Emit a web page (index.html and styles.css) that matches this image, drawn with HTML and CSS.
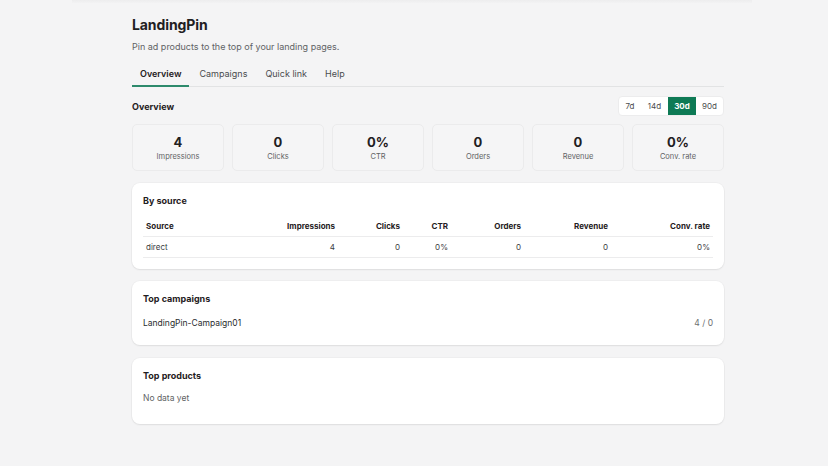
FILE: index.html
```html
<!DOCTYPE html>
<html>
<head>
<meta charset="utf-8">
<link rel="stylesheet" href="styles.css">
</head>
<body>
<div class="topband"></div>
<main class="page">
  <header class="head">
    <h1 class="title">LandingPin</h1>
    <p class="subtitle">Pin ad products to the top of your landing pages.</p>
  </header>
  <nav class="tabs">
    <span class="tab active">Overview</span>
    <span class="tab">Campaigns</span>
    <span class="tab">Quick link</span>
    <span class="tab">Help</span>
  </nav>
  <div class="section-head">
    <h2 class="section-title">Overview</h2>
    <div class="periods">
      <span class="period">7d</span>
      <span class="period">14d</span>
      <span class="period on">30d</span>
      <span class="period">90d</span>
    </div>
  </div>
  <div class="stats">
    <div class="stat"><div class="val">4</div><div class="lbl">Impressions</div></div>
    <div class="stat"><div class="val">0</div><div class="lbl">Clicks</div></div>
    <div class="stat"><div class="val">0%</div><div class="lbl">CTR</div></div>
    <div class="stat"><div class="val">0</div><div class="lbl">Orders</div></div>
    <div class="stat"><div class="val">0</div><div class="lbl">Revenue</div></div>
    <div class="stat"><div class="val">0%</div><div class="lbl">Conv. rate</div></div>
  </div>
  <section class="card">
    <h3 class="card-title">By source</h3>
    <table class="tbl">
      <colgroup>
        <col class="c-src"><col class="c-imp"><col class="c-clk"><col class="c-ctr"><col class="c-ord"><col class="c-rev"><col class="c-conv">
      </colgroup>
      <thead>
        <tr><th class="l">Source</th><th>Impressions</th><th>Clicks</th><th>CTR</th><th>Orders</th><th>Revenue</th><th>Conv. rate</th></tr>
      </thead>
      <tbody>
        <tr><td class="l">direct</td><td>4</td><td>0</td><td>0%</td><td>0</td><td>0</td><td>0%</td></tr>
      </tbody>
    </table>
  </section>
  <section class="card">
    <h3 class="card-title">Top campaigns</h3>
    <div class="row"><span>LandingPin-Campaign01</span><span class="muted">4 / 0</span></div>
  </section>
  <section class="card last">
    <h3 class="card-title">Top products</h3>
    <p class="empty">No data yet</p>
  </section>
</main>
</body>
</html>
```

FILE: styles.css
```css
* { box-sizing: border-box; }
html, body { margin: 0; padding: 0; }
body {
  background: #f4f4f5;
  font-family: Inter, "Liberation Sans", sans-serif;
  color: #202223;
  height: 466px;
  overflow: hidden;
}
.topband {
  margin: 0 76px 0 72px;
  height: 3px;
  background: linear-gradient(#ededee, #f2f2f3);
}
.page {
  width: 592px;
  margin-left: 132px;
  padding-top: 13px;
}
.title {
  margin: 0;
  font-size: 14px;
  font-weight: 700;
  line-height: 18px;
  color: #1f2022;
  letter-spacing: -0.1px;
}
.subtitle {
  margin: 7px 0 0;
  font-size: 9px;
  line-height: 12px;
  color: #616365;
}
.tabs {
  display: flex;
  margin-top: 12px;
  border-bottom: 1px solid #e2e3e4;
  height: 22px;
}
.tab {
  font-size: 9px;
  line-height: 13px;
  padding: 2px 8px 0;
  margin-right: 2px;
  color: #4a4c4e;
}
.tab.active {
  color: #1f2022;
  font-weight: 600;
  border-bottom: 2px solid #2d8a6c;
  margin-bottom: -1px;
}
.section-head {
  display: flex;
  align-items: center;
  justify-content: space-between;
  margin-top: 9px;
}
.section-title {
  margin: 0;
  font-size: 9px;
  font-weight: 700;
  color: #1f2022;
}
.periods {
  display: flex;
  background: #fff;
  border-radius: 4px;
  border: 1px solid #ececed;
  height: 20px;
  overflow: hidden;
}
.period {
  font-size: 8px;
  line-height: 18px;
  color: #4a4c4e;
  width: 27px;
  text-align: center;
}
.period:first-child { width: 22px; }
.period.on {
  background: #0e7a55;
  color: #fff;
  font-weight: 700;
  width: 28px;
}
.stats {
  display: grid;
  grid-template-columns: repeat(6, 1fr);
  gap: 8px;
  margin-top: 8px;
}
.stat {
  height: 47px;
  border: 1px solid #ebebec;
  background: #f5f5f6;
  border-radius: 5px;
  text-align: center;
  padding-top: 9px;
}
.val {
  font-size: 13px;
  font-weight: 700;
  line-height: 16px;
  color: #1f2022;
}
.lbl {
  margin-top: 2px;
  font-size: 7.5px;
  line-height: 10px;
  color: #616365;
}
.card {
  background: #fff;
  border-radius: 8px;
  box-shadow: 0 1px 2px rgba(0,0,0,0.07), 0 0 0 1px rgba(0,0,0,0.025);
  padding: 11px 11px 10px;
  margin-top: 12px;
}
.card.last { margin-top: 13px; }
.card-title {
  margin: 0;
  font-size: 9px;
  font-weight: 700;
  line-height: 14px;
  color: #1f2022;
}
.tbl {
  width: 570px;
  table-layout: fixed;
  border-collapse: collapse;
  margin-top: 13px;
  margin-bottom: 1px;
  font-size: 8px;
}
.c-src { width: 130px; }
.c-imp { width: 65px; }
.c-clk { width: 65px; }
.c-ctr { width: 48px; }
.c-ord { width: 73px; }
.c-rev { width: 87px; }
.c-conv { width: 102px; }
.tbl th, .tbl td {
  text-align: right;
  padding: 0 3px;
  border-bottom: 1px solid #ececed;
}
.tbl th {
  font-weight: 700;
  height: 15px;
  vertical-align: top;
  color: #1f2022;
  line-height: 11px;
}
.tbl td {
  height: 21px;
  color: #3b3d3f;
}
.tbl .l { text-align: left; }
.row {
  display: flex;
  justify-content: space-between;
  margin-top: 11px;
  font-size: 8.5px;
  line-height: 12px;
  padding-bottom: 6px;
  color: #2a2c2e;
}
.muted { color: #6d6f71; }
.empty {
  margin: 9px 0 0;
  font-size: 8.5px;
  line-height: 12px;
  color: #616365;
  padding-bottom: 10px;
}
```
